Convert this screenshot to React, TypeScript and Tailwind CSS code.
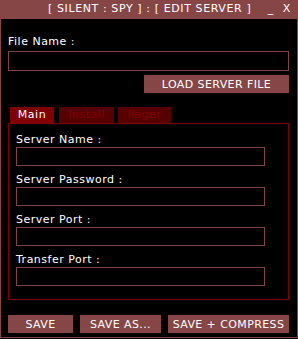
import React from "react";

const font = { fontFamily: "Tahoma, 'DejaVu Sans', Verdana, sans-serif" };

function Field({ label }: { label: string }) {
  return (
    <div className="flex flex-col">
      <div className="h-[13px] text-[11px] leading-[13px] tracking-[0.5px] text-white">
        {label}
      </div>
      <div className="mt-px h-[19px] w-[249px] border border-[#804444] bg-black" />
    </div>
  );
}

function Btn({ label, w }: { label: string; w: string }) {
  return (
    <button
      className={`${w} flex h-[18px] items-center justify-center bg-[#864646] text-[11px] leading-none tracking-[0.4px] text-white`}
    >
      {label}
    </button>
  );
}

export default function App() {
  return (
    <div className="h-[339px] w-[298px] bg-black">
      <div
        style={font}
        className="flex h-[338px] w-[298px] flex-col border-x border-b border-[#864646] bg-black"
      >
        {/* title bar */}
        <div className="flex h-[19px] shrink-0 items-center bg-[#864646] text-[11px] tracking-[0.6px] text-white">
          <span className="ml-[47px]">[ SILENT : SPY ] : [ EDIT SERVER ]</span>
          <span className="ml-auto mr-[6px] flex gap-[9px]">
            <span>_</span>
            <span>X</span>
          </span>
        </div>

        <div className="flex flex-col px-[7px]">
          <div className="mt-[16px] h-[13px] text-[11px] leading-[13px] tracking-[0.5px] text-white">
            File Name :
          </div>
          <div className="mt-[3px] h-[20px] w-[281px] border border-[#804444]" />

          <div className="mt-[4px] flex justify-end pr-[1px]">
            <Btn label="LOAD SERVER FILE" w="w-[145px]" />
          </div>

          {/* tabs */}
          <div className="mt-[14px] flex h-[16px] items-end pl-[2px] text-[11px] tracking-[0.5px]">
            <div className="flex h-[16px] w-[44px] items-center justify-center bg-[#800000] text-white">
              Main
            </div>
            <div className="ml-[5px] flex h-[16px] w-[55px] items-center justify-center bg-[#560000] text-[#800000]">
              Install
            </div>
            <div className="ml-[4px] flex h-[16px] w-[53px] items-center justify-center bg-[#560000] text-[#800000]">
              Pager
            </div>
          </div>

          <div className="flex w-[281px] flex-col gap-[7px] border border-[#800000] pb-[13px] pl-[7px] pt-[9px]">
            <Field label="Server Name :" />
            <Field label="Server Password :" />
            <Field label="Server Port :" />
            <Field label="Transfer Port :" />
          </div>

          <div className="mt-[15px] flex gap-[7px]">
            <Btn label="SAVE" w="w-[65px]" />
            <Btn label="SAVE AS..." w="w-[81px]" />
            <Btn label="SAVE + COMPRESS" w="w-[121px]" />
          </div>
        </div>
      </div>
    </div>
  );
}
